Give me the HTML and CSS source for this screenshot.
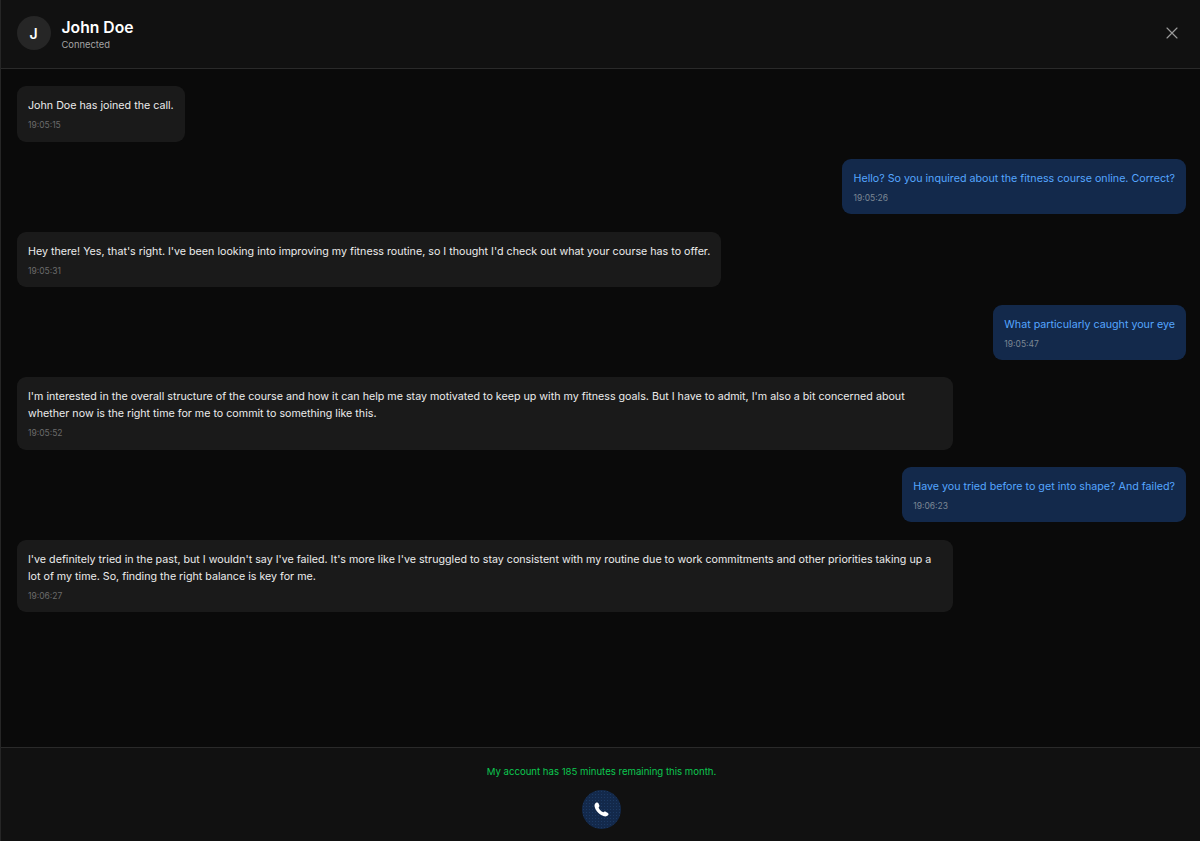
FILE: index.html
```html
<!DOCTYPE html>
<html lang="en">
<head>
<meta charset="utf-8">
<title>Call</title>
<link rel="stylesheet" href="styles.css">
</head>
<body>
<div class="panel">
  <header class="header">
    <div class="who">
      <div class="avatar">J</div>
      <div class="who-text">
        <div class="name">John Doe</div>
        <div class="status">Connected</div>
      </div>
    </div>
    <button class="close" aria-label="Close">
      <svg width="16" height="16" viewBox="0 0 16 16" fill="none" stroke="currentColor" stroke-width="1.15" stroke-linecap="round"><path d="M3 3l10 10M13 3L3 13"/></svg>
    </button>
  </header>
  <main class="messages">
    <div class="msg them"><p>John Doe has joined the call.</p><time>19:05:15</time></div>
    <div class="msg me"><p>Hello? So you inquired about the fitness course online. Correct?</p><time>19:05:26</time></div>
    <div class="msg them"><p>Hey there! Yes, that's right. I've been looking into improving my fitness routine, so I thought I'd check out what your course has to offer.</p><time>19:05:31</time></div>
    <div class="msg me"><p>What particularly caught your eye</p><time>19:05:47</time></div>
    <div class="msg them"><p>I'm interested in the overall structure of the course and how it can help me stay motivated to keep up with my fitness goals. But I have to admit, I'm also a bit concerned about whether now is the right time for me to commit to something like this.</p><time>19:05:52</time></div>
    <div class="msg me"><p>Have you tried before to get into shape? And failed?</p><time>19:06:23</time></div>
    <div class="msg them"><p>I've definitely tried in the past, but I wouldn't say I've failed. It's more like I've struggled to stay consistent with my routine due to work commitments and other priorities taking up a lot of my time. So, finding the right balance is key for me.</p><time>19:06:27</time></div>
  </main>
  <footer class="footer">
    <div class="remaining">My account has 185 minutes remaining this month.</div>
    <button class="call" aria-label="Call">
      <svg width="15" height="15" viewBox="0 0 15 15" fill="#fff"><path d="M2 .8C3 .2 4 .4 4.400 1.200L5.400 3.600C5.600 4.100 5.400 4.500 5 4.900L4.600 5.400C5.300 7.300 7 9.200 9.400 10.300L10 9.800C10.400 9.400 10.900 9.300 11.400 9.600L13.800 10.900C14.600 11.400 14.800 12.200 14.200 13C13.400 14.100 11.800 14.800 10 14.300C5.500 13 1.600 9 .6 4.600C.3 3 .9 1.500 2 .8Z"/></svg>
    </button>
  </footer>
</div>
</body>
</html>
```
FILE: styles.css
```css
* { box-sizing: border-box; }
html, body { height: 100%; }
body {
  margin: 0;
  background: #0a0a0a;
  color: #e5e5e5;
  font-family: Inter, "Liberation Sans", sans-serif;
}
.panel {
  height: 841px;
  display: flex;
  flex-direction: column;
  border-left: 1px solid #262626;
}
.header {
  height: 69px;
  flex: none;
  display: flex;
  align-items: center;
  justify-content: space-between;
  padding: 0 16px 2px 16px;
  background: #111111;
  border-bottom: 1px solid #2a2a2a;
}
.who { display: flex; align-items: center; gap: 10.5px; }
.avatar {
  width: 34px;
  height: 34px;
  padding-right: 1px;
  border-radius: 50%;
  background: #262626;
  color: #fff;
  font-size: 14px;
  font-weight: 600;
  display: flex;
  align-items: center;
  justify-content: center;
}
.who-text { padding-top: 3px; }
.name { font-size: 15.7px; font-weight: 600; line-height: 20px; color: #fff; }
.status { font-size: 9.4px; line-height: 14px; color: #a3a3a3; }
.close {
  background: none;
  border: 0;
  padding: 0;
  color: #9a9a9a;
  display: flex;
  margin-right: 4px;
}
.messages {
  flex: 1;
  display: flex;
  flex-direction: column;
  align-items: flex-start;
  gap: 17.45px;
  padding: 17.4px 14px 0 16px;
  overflow: hidden;
}
.msg {
  max-width: 936px;
  padding: 11px 11px 10.3px 11px;
  border-radius: 9px;
  background: #1a1a1a;
  color: #ececec;
}
.msg.me { align-self: flex-end; background: #13294b; color: #55a6ff; }
.msg p { margin: 0; font-size: 10.7px; line-height: 17px; }
.msg time { display: block; margin-top: 5px; font-size: 8.5px; line-height: 12px; color: #6b6b6b; }
.msg.me time { color: #7b8794; }
.footer {
  height: 94px;
  flex: none;
  display: flex;
  flex-direction: column;
  align-items: center;
  padding: 18px 0 0 2px;
  background: #111111;
  border-top: 1px solid #2a2a2a;
}
.remaining { font-size: 9.6px; line-height: 12px; color: #0cc850; }
.call {
  margin-top: 12px;
  width: 39px;
  height: 39px;
  border: 0;
  padding: 0;
  border-radius: 50%;
  background-color: #13294b;
  background-image: radial-gradient(circle, #1d3a63 0.6px, transparent 1px);
  background-size: 3px 3px;
  display: flex;
  align-items: center;
  justify-content: center;
}
```
